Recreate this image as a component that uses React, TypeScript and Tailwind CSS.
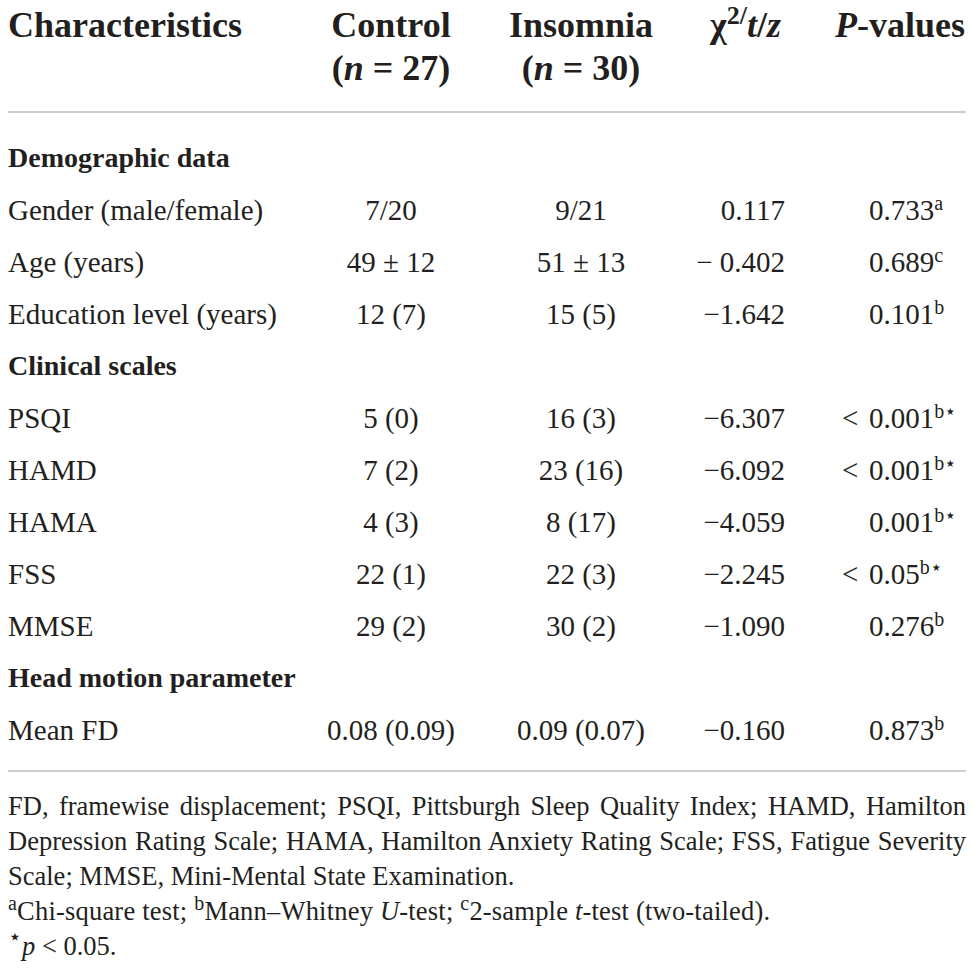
import React from "react";

type Row =
    | { kind: "section"; label: string }
    | { kind: "data"; label: string; control: string; insomnia: string; stat: string; lt?: boolean; p: string; sup: string };

const rows: Row[] = [
    { kind: "section", label: "Demographic data" },
    { kind: "data", label: "Gender (male/female)", control: "7/20", insomnia: "9/21", stat: "0.117", p: "0.733", sup: "a" },
    { kind: "data", label: "Age (years)", control: "49 ± 12", insomnia: "51 ± 13", stat: "− 0.402", p: "0.689", sup: "c" },
    { kind: "data", label: "Education level (years)", control: "12 (7)", insomnia: "15 (5)", stat: "−1.642", p: "0.101", sup: "b" },
    { kind: "section", label: "Clinical scales" },
    { kind: "data", label: "PSQI", control: "5 (0)", insomnia: "16 (3)", stat: "−6.307", lt: true, p: "0.001", sup: "b⋆" },
    { kind: "data", label: "HAMD", control: "7 (2)", insomnia: "23 (16)", stat: "−6.092", lt: true, p: "0.001", sup: "b⋆" },
    { kind: "data", label: "HAMA", control: "4 (3)", insomnia: "8 (17)", stat: "−4.059", p: "0.001", sup: "b⋆" },
    { kind: "data", label: "FSS", control: "22 (1)", insomnia: "22 (3)", stat: "−2.245", lt: true, p: "0.05", sup: "b⋆" },
    { kind: "data", label: "MMSE", control: "29 (2)", insomnia: "30 (2)", stat: "−1.090", p: "0.276", sup: "b" },
    { kind: "section", label: "Head motion parameter" },
    { kind: "data", label: "Mean FD", control: "0.08 (0.09)", insomnia: "0.09 (0.07)", stat: "−0.160", p: "0.873", sup: "b" },
];

const cols = "grid grid-cols-[292px_182px_198px_105px_181px]";

export default function App() {
    return (
        <div className="w-[974px] bg-white px-2 text-[#231f20] font-['Liberation_Serif','Times_New_Roman',serif]">
            {/* header */}
            <div className={`${cols} h-[111px] pt-[4px] text-[36px] font-bold leading-[43px]`}>
                <div>Characteristics</div>
                <div className="text-center">
                    Control
                    <br />(<i>n</i> = 27)
                </div>
                <div className="text-center">
                    Insomnia
                    <br />(<i>n</i> = 30)
                </div>
                <div className="mr-[4px] whitespace-nowrap text-right">
                    χ<sup className="text-[26px]">2/</sup>
                    <i>t</i>/<i>z</i>
                </div>
                <div className="whitespace-nowrap pl-[50px]">
                    <i>P</i>-values
                </div>
            </div>
            <div className="h-[2px] bg-[#cdcdcd]" />

            {/* body */}
            <div className="pt-[19px] pb-[14px]">
                {rows.map((r, i) =>
                    r.kind === "section" ? (
                        <div key={i} className="h-[52px] text-[28px] font-bold leading-[52px]">
                            {r.label}
                        </div>
                    ) : (
                        <div key={i} className={`${cols} h-[52px] text-[29px] leading-[52px] whitespace-nowrap`}>
                            <div>{r.label}</div>
                            <div className="text-center">{r.control}</div>
                            <div className="text-center">{r.insomnia}</div>
                            <div className="text-right">{r.stat}</div>
                            <div className="flex pl-[57px]">
                                <span className="w-[27px]">{r.lt ? "<" : ""}</span>
                                <span>
                                    {r.p}
                                    <sup className="text-[20px]">{r.sup}</sup>
                                </span>
                            </div>
                        </div>
                    )
                )}
            </div>
            <div className="h-[2px] bg-[#cdcdcd]" />

            {/* footnotes */}
            <div className="pt-[17px] pb-[10px] text-[26.5px] leading-[35px]">
                <p className="text-justify [text-align-last:justify]">
                    FD, framewise displacement; PSQI, Pittsburgh Sleep Quality Index; HAMD, Hamilton
                </p>
                <p className="text-justify [text-align-last:justify]">
                    Depression Rating Scale; HAMA, Hamilton Anxiety Rating Scale; FSS, Fatigue Severity
                </p>
                <p>Scale; MMSE, Mini-Mental State Examination.</p>
                <p className="tracking-[0.2px]">
                    <sup className="text-[20px]">a</sup>Chi-square test; <sup className="text-[20px]">b</sup>Mann–Whitney{" "}
                    <i>U</i>-test; <sup className="text-[20px]">c</sup>2-sample <i>t</i>-test (two-tailed).
                </p>
                <p>
                    <sup className="text-[22px]">⋆</sup>
                    <i>p</i> &lt; 0.05.
                </p>
            </div>
        </div>
    );
}
